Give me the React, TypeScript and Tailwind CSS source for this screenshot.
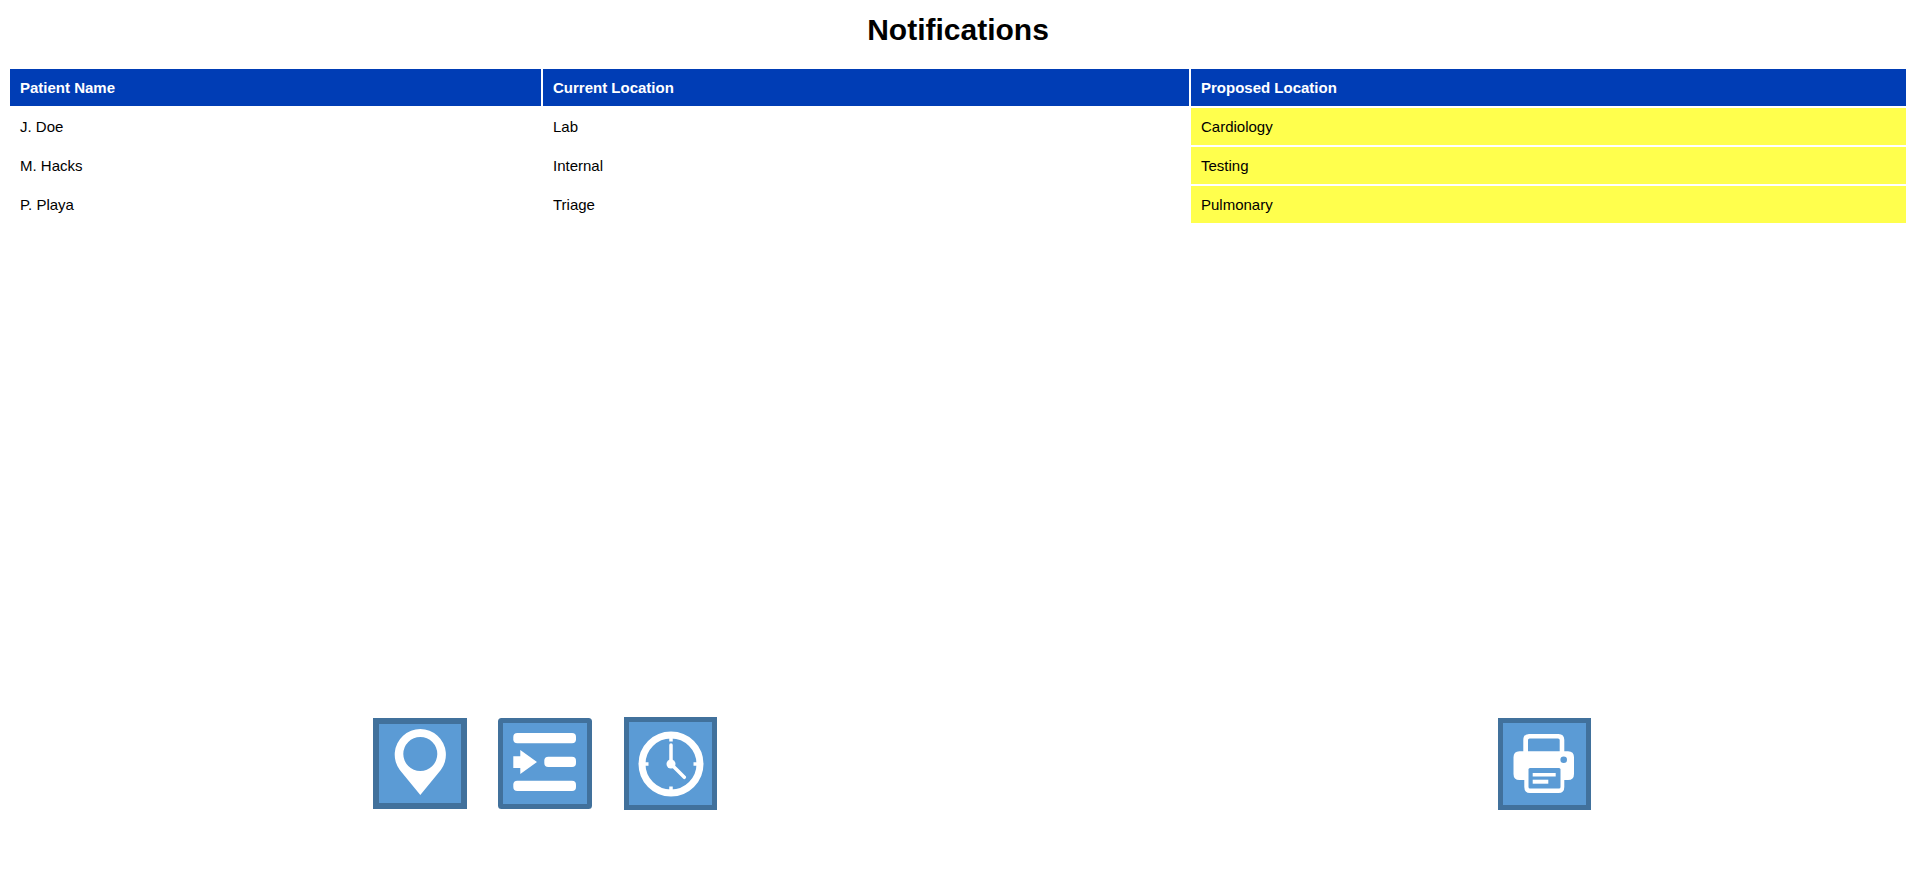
const rows = [
  { name: "J. Doe", current: "Lab", proposed: "Cardiology" },
  { name: "M. Hacks", current: "Internal", proposed: "Testing" },
  { name: "P. Playa", current: "Triage", proposed: "Pulmonary" },
]

const PinIcon = () => (
  <svg viewBox="0 0 94 91" className="block h-[91px] w-[94px]">
    <rect x="3" y="3" width="88" height="85" fill="#5b9bd5" stroke="#41719c" strokeWidth="6" />
    <path
      fillRule="evenodd"
      fill="#fff"
      d="M47.3 77 L26.8 52 A25.6 25.6 0 1 1 67.8 52 Z M47.3 19 A17 17 0 1 0 47.3 53 A17 17 0 1 0 47.3 19 Z"
    />
  </svg>
)

const QueueIcon = () => (
  <svg viewBox="0 0 94 91" className="block h-[91px] w-[94px]">
    <rect x="2.5" y="2.5" width="89" height="86" rx="1" fill="#5b9bd5" stroke="#41719c" strokeWidth="5" />
    <g fill="#fff">
      <rect x="15.3" y="15" width="62.7" height="10.3" rx="4" />
      <rect x="46.3" y="38.7" width="31.7" height="10.3" rx="4" />
      <rect x="15.3" y="62.7" width="62.7" height="10.3" rx="4" />
      <path d="M15.3 38.3 H22.3 V32 L39 44 L22.3 56 V50 H15.3 Z" />
    </g>
  </svg>
)

const ClockIcon = () => (
  <svg viewBox="0 0 93 93" className="block h-[93px] w-[93px]">
    <rect x="2.5" y="2.5" width="88" height="88" fill="#5b9bd5" stroke="#41719c" strokeWidth="5" />
    <circle cx="47" cy="47" r="29" fill="none" stroke="#fff" strokeWidth="7" />
    <g stroke="#fff" strokeWidth="3.5" fill="none">
      <path d="M47 20 V24.5" />
      <path d="M47 69.5 V74" />
      <path d="M20 47 H24.5" />
      <path d="M69.5 47 H74" />
    </g>
    <path d="M47 28 V47 L60.3 60.3" fill="none" stroke="#fff" strokeWidth="3.5" strokeLinecap="round" strokeLinejoin="round" />
    <circle cx="47" cy="47" r="4.5" fill="#fff" />
  </svg>
)

const PrinterIcon = () => (
  <svg viewBox="0 0 93 92" className="block h-[92px] w-[93px]">
    <rect x="2.5" y="2.5" width="88" height="87" fill="#5b9bd5" stroke="#41719c" strokeWidth="5" />
    <path
      fillRule="evenodd"
      fill="#fff"
      d="M31 16 H60.5 Q66.3 16 66.3 22 V33.3 H70 Q76 33.3 76 39.3 V56 Q76 62 70 62 H66.3 V69 Q66.3 75 60.5 75 H32 Q26.3 75 26.3 69 V62 H21.5 Q15.5 62 15.5 56 V39.3 Q15.5 33.3 21.5 33.3 H25.3 V22 Q25.3 16 31 16 Z M31.7 20.5 Q30 20.5 30 22 V33.3 H61.7 V22 Q61.7 20.5 60 20.5 Z"
    />
    <rect x="30.5" y="50" width="32" height="20.5" rx="1.5" fill="#5b9bd5" />
    <rect x="34.7" y="55" width="23" height="3.5" fill="#fff" />
    <rect x="34.7" y="61.7" width="15.6" height="4" fill="#fff" />
    <circle cx="65.7" cy="41.7" r="3.3" fill="#5b9bd5" />
  </svg>
)

const App = (): JSX.Element => {
  return (
    <div className="flex h-[880px] flex-col font-['Liberation_Sans',Arial,sans-serif] bg-white text-black">
      <h1 className="pt-[11px] pb-[19px] text-center text-[30px] leading-[37px] font-bold">
        Notifications
      </h1>
      <div className="px-2">
        <table className="w-full table-fixed border-separate border-spacing-[2px] text-[15px]">
          <thead>
            <tr className="bg-[#003db5] text-white">
              <th className="h-[37px] w-[531px] px-[10px] pt-[1px] text-left font-bold">Patient Name</th>
              <th className="h-[37px] w-[646px] px-[10px] pt-[1px] text-left font-bold">Current Location</th>
              <th className="h-[37px] px-[10px] pt-[1px] text-left font-bold">Proposed Location</th>
            </tr>
          </thead>
          <tbody>
            {rows.map((row) => (
              <tr key={row.name}>
                <td className="h-[37px] px-[10px] pt-[1px]">{row.name}</td>
                <td className="h-[37px] px-[10px] pt-[1px]">{row.current}</td>
                <td className="h-[37px] bg-[#ffff4d] px-[10px] pt-[1px]">{row.proposed}</td>
              </tr>
            ))}
          </tbody>
        </table>
      </div>
      <div className="mt-auto mb-[70px] flex items-center pr-[325px] pl-[373px]">
        <div className="flex items-center gap-[31px]">
          <PinIcon />
          <QueueIcon />
          <div className="ml-px">
            <ClockIcon />
          </div>
        </div>
        <div className="ml-auto">
          <PrinterIcon />
        </div>
      </div>
    </div>
  )
}

export default App
